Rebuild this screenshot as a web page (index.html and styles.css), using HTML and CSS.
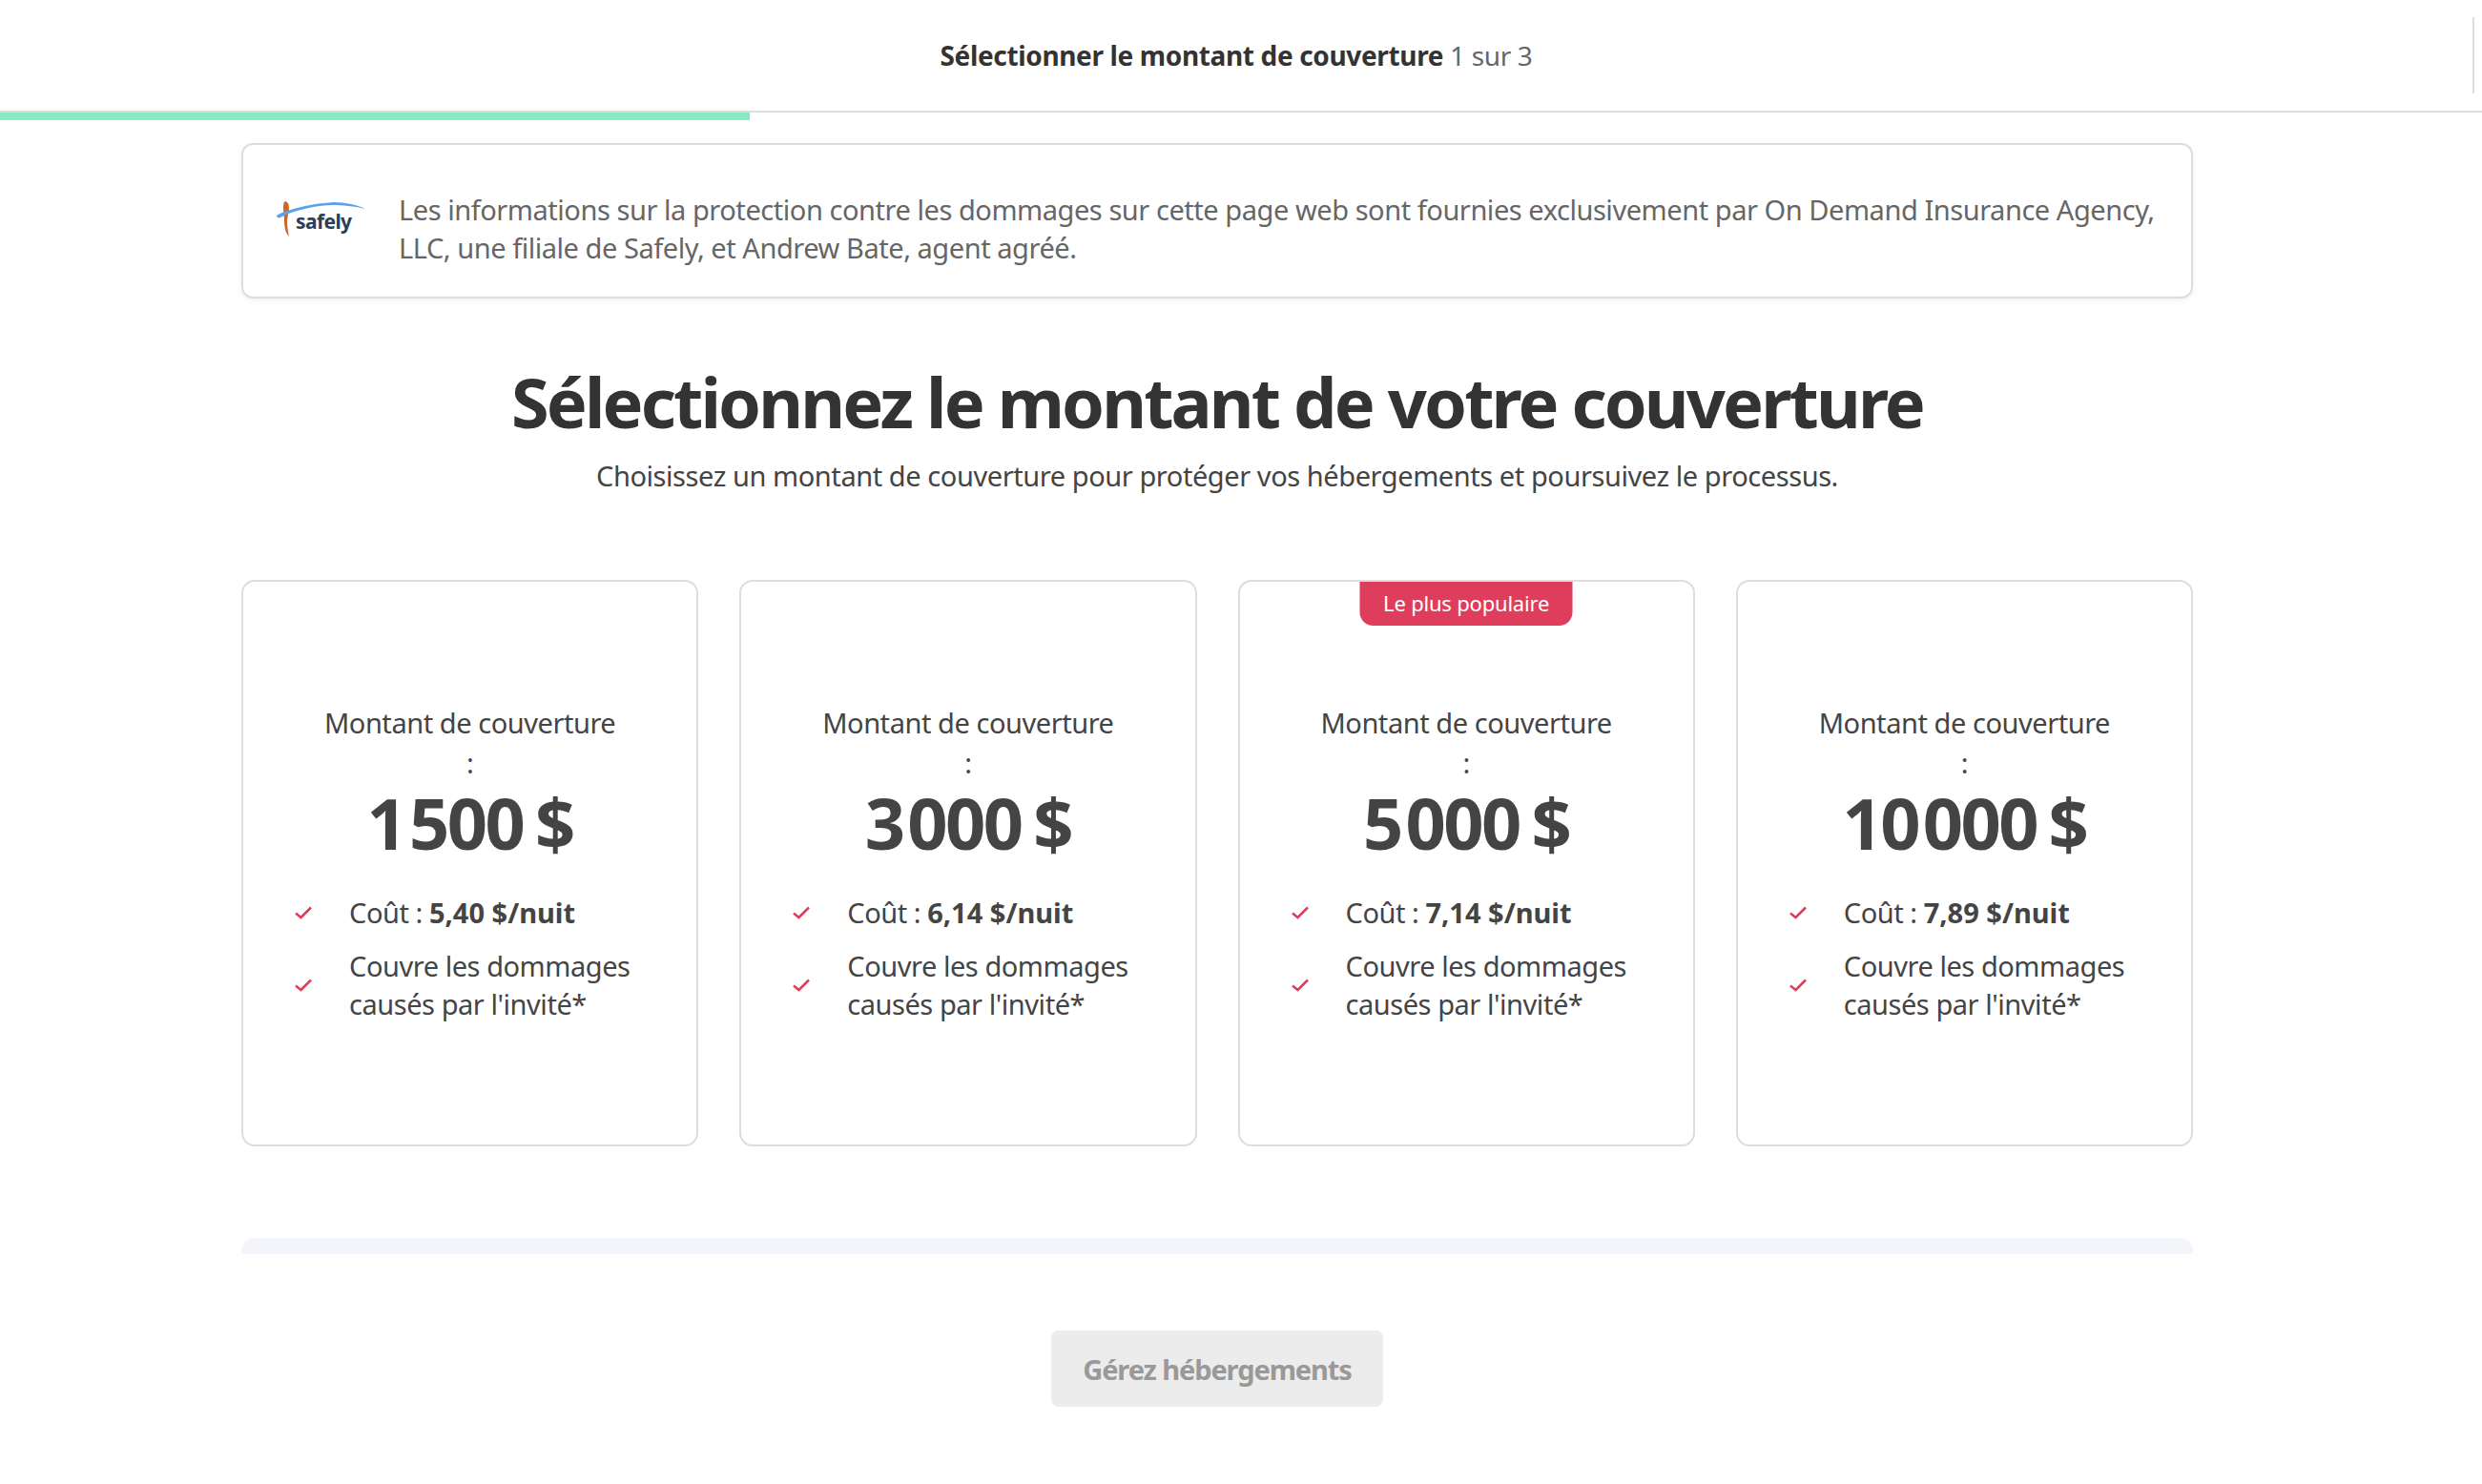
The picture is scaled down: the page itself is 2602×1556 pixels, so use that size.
FILE: index.html
```html
<!DOCTYPE html>
<html lang="fr">
<head>
  <meta charset="UTF-8" />
  <meta name="viewport" content="width=device-width, initial-scale=1.0" />
  <title>Sélectionner le montant de couverture</title>
  <link rel="stylesheet" href="styles.css">
</head>
<body>
  <header class="topbar">
    <p class="step"><strong>Sélectionner le montant de couverture</strong> 1 sur 3</p>
    <span class="topbar-line"></span>
  </header>
  <div class="progress"><div class="progress-bar"></div></div>

  <main class="content">
    <!-- Notice -->
    <section class="notice">
      <svg class="logo" width="94" height="38" viewBox="0 0 94 38" aria-label="Safely">
        <path d="M9 0 C12 1 13 3 13 8 L11 20 C11 27 12 32 13 37 C9 33 8 26 8 19 L7 8 C7 4 7 1 9 0 Z" fill="#c9682c"/>
        <path d="M0 15 C8 10 30 3 60 1 C72 1 85 4 93 8 C80 5 70 4 58 4 C35 5 15 11 4 17 C2 18 0 17 0 15 Z" fill="#5ba3e6"/>
        <text class="logo-text" x="20" y="29">safely</text>
      </svg>
      <p class="notice-text">Les informations sur la protection contre les dommages sur cette page web sont fournies exclusivement par On Demand Insurance Agency, LLC, une filiale de Safely, et Andrew Bate, agent agréé.</p>
    </section>

    <h1 class="title">Sélectionnez le montant de votre couverture</h1>
    <p class="subtitle">Choisissez un montant de couverture pour protéger vos hébergements et poursuivez le processus.</p>

    <!-- Cartes -->
    <section class="plans">
      <article class="plan">
        <p class="plan-label">Montant de couverture<br />:</p>
        <p class="plan-amount">1&#8202;500&nbsp;$</p>
        <ul class="plan-list">
          <li class="plan-item">
            <svg class="check" width="18" height="14" viewBox="0 0 18 14"><path d="M1 7.5 L6.5 12 L17 1.5"/></svg>
            <span>Coût : <strong>5,40 $/nuit</strong></span>
          </li>
          <li class="plan-item">
            <svg class="check" width="18" height="14" viewBox="0 0 18 14"><path d="M1 7.5 L6.5 12 L17 1.5"/></svg>
            <span>Couvre les dommages causés par l'invité*</span>
          </li>
        </ul>
      </article>

      <article class="plan">
        <p class="plan-label">Montant de couverture<br />:</p>
        <p class="plan-amount">3&#8202;000&nbsp;$</p>
        <ul class="plan-list">
          <li class="plan-item">
            <svg class="check" width="18" height="14" viewBox="0 0 18 14"><path d="M1 7.5 L6.5 12 L17 1.5"/></svg>
            <span>Coût : <strong>6,14 $/nuit</strong></span>
          </li>
          <li class="plan-item">
            <svg class="check" width="18" height="14" viewBox="0 0 18 14"><path d="M1 7.5 L6.5 12 L17 1.5"/></svg>
            <span>Couvre les dommages causés par l'invité*</span>
          </li>
        </ul>
      </article>

      <article class="plan">
        <span class="badge">Le plus populaire</span>
        <p class="plan-label">Montant de couverture<br />:</p>
        <p class="plan-amount">5&#8202;000&nbsp;$</p>
        <ul class="plan-list">
          <li class="plan-item">
            <svg class="check" width="18" height="14" viewBox="0 0 18 14"><path d="M1 7.5 L6.5 12 L17 1.5"/></svg>
            <span>Coût : <strong>7,14 $/nuit</strong></span>
          </li>
          <li class="plan-item">
            <svg class="check" width="18" height="14" viewBox="0 0 18 14"><path d="M1 7.5 L6.5 12 L17 1.5"/></svg>
            <span>Couvre les dommages causés par l'invité*</span>
          </li>
        </ul>
      </article>

      <article class="plan">
        <p class="plan-label">Montant de couverture<br />:</p>
        <p class="plan-amount">10&#8202;000&nbsp;$</p>
        <ul class="plan-list">
          <li class="plan-item">
            <svg class="check" width="18" height="14" viewBox="0 0 18 14"><path d="M1 7.5 L6.5 12 L17 1.5"/></svg>
            <span>Coût : <strong>7,89 $/nuit</strong></span>
          </li>
          <li class="plan-item">
            <svg class="check" width="18" height="14" viewBox="0 0 18 14"><path d="M1 7.5 L6.5 12 L17 1.5"/></svg>
            <span>Couvre les dommages causés par l'invité*</span>
          </li>
        </ul>
      </article>
    </section>

    <div class="panel"></div>

    <div class="actions">
      <button class="btn" type="button" disabled>Gérez hébergements</button>
    </div>
  </main>
</body>
</html>
```

FILE: styles.css
```css
* {
  box-sizing: border-box;
}

html, body {
  height: 100%;
  overflow: hidden;
}

body {
  font-family: "Noto Sans", "Open Sans", sans-serif;
  margin: 0;
  background-color: #fff;
  color: #444;
}

p {
  margin: 0;
}

.topbar {
  position: relative;
  height: 118px;
  border-bottom: 2px solid #ddd;
  display: flex;
  align-items: center;
  justify-content: center;
  padding-right: 10px;
}

.step {
  font-size: 28px;
  letter-spacing: -0.35px;
  color: #666;
}

.step strong {
  color: #333;
  font-weight: 700;
}

.topbar-line {
  position: absolute;
  top: 18px;
  right: 8px;
  width: 2px;
  height: 80px;
  background-color: #ddd;
}

.progress {
  height: 8px;
}

.progress-bar {
  width: 786px;
  height: 100%;
  background-color: #86ebc5;
}

.content {
  width: 2046px;
  margin-left: 253px;
  padding-top: 24px;
}

.notice {
  height: 163px;
  border: 2px solid #ddd;
  border-radius: 12px;
  box-shadow: 0 2px 6px rgba(0,0,0,0.06);
  display: flex;
  align-items: center;
  padding: 0 34px 0 35px;
}

.logo {
  flex: none;
  margin-right: 34px;
  margin-top: -4px;
}

.logo-text {
  font-size: 21px;
  font-weight: 700;
  letter-spacing: -0.6px;
  fill: #2c3e56;
}

.notice-text {
  margin-top: 16px;
  font-size: 29px;
  line-height: 40px;
  letter-spacing: -0.45px;
  color: #666;
}

.title {
  margin: 60px 0 0;
  font-size: 72px;
  line-height: 96px;
  font-weight: 700;
  letter-spacing: -2.85px;
  text-align: center;
  color: #333;
}

.subtitle {
  margin-top: 10px;
  font-size: 29px;
  line-height: 40px;
  letter-spacing: -0.43px;
  text-align: center;
  color: #444;
}

.plans {
  display: grid;
  grid-template-columns: repeat(4, 1fr);
  gap: 43px;
  margin-top: 89px;
}

.plan {
  position: relative;
  height: 594px;
  border: 2px solid #ddd;
  border-radius: 14px;
  padding: 127px 40px 0 30px;
}

.badge {
  position: absolute;
  top: 0;
  left: 50%;
  transform: translateX(-50%);
  width: 223px;
  height: 46px;
  border-radius: 0 0 14px 14px;
  background-color: #de3e5c;
  color: #fff;
  font-size: 22px;
  line-height: 44px;
  letter-spacing: -0.2px;
  text-align: center;
}

.plan-label {
  font-size: 29px;
  line-height: 42px;
  letter-spacing: -0.45px;
  text-align: center;
  margin-right: -10px;
}

.plan-amount {
  margin-right: -10px;
  font-size: 74px;
  line-height: 84px;
  font-weight: 700;
  letter-spacing: -2.6px;
  word-spacing: -4px;
  text-align: center;
}

.plan-list {
  list-style: none;
  margin: 32px 0 0;
  padding: 0;
}

.plan-item {
  display: flex;
  align-items: center;
  font-size: 29px;
  line-height: 40px;
  letter-spacing: -0.45px;
  margin-bottom: 16px;
}

.plan-item strong {
  font-weight: 700;
  letter-spacing: 0;
}

.check {
  flex: none;
  margin: 0 39px 0 24px;
}

.check path {
  fill: none;
  stroke: #de3e5c;
  stroke-width: 2.5;
}

.panel {
  height: 17px;
  margin-top: 96px;
  background-color: #f4f5fa;
  border-radius: 14px 14px 0 0;
}

.actions {
  display: flex;
  justify-content: center;
  margin-top: 80px;
}

.btn {
  width: 348px;
  height: 80px;
  border: none;
  border-radius: 8px;
  background-color: #ececec;
  color: #999;
  font-family: inherit;
  font-size: 29px;
  font-weight: 700;
  letter-spacing: -1.1px;
}
```
